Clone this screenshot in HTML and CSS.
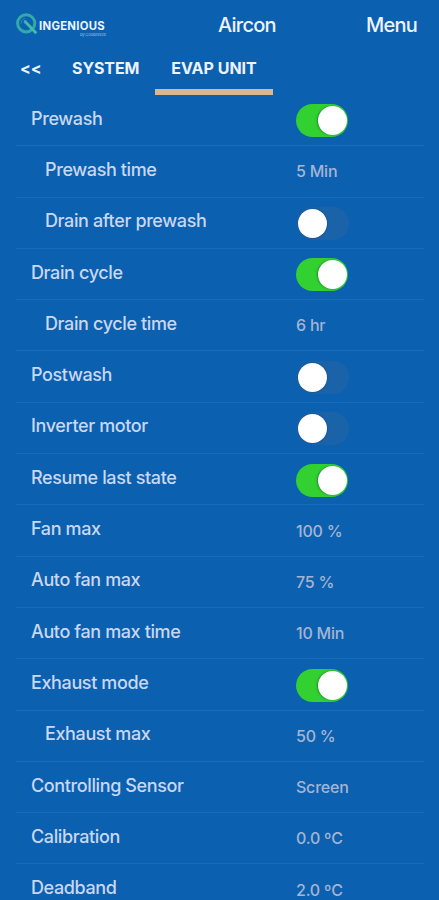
FILE: index.html
```
<!DOCTYPE html>
<html lang="en">
<head>
<meta charset="utf-8">
<title>Aircon</title>
<link rel="stylesheet" href="styles.css">
</head>
<body>
<header class="bar">
  <div class="logo">
    <svg class="mark" viewBox="0 0 22 22" width="22" height="22" fill="none">
      <circle cx="10.2" cy="10.3" r="8.6" stroke="#32aaa6" stroke-width="3"/>
      <path d="M5.2 10.8A5.2 5.2 0 0 1 8.7 5.4" stroke="#2d91b5" stroke-width="1"/>
      <path d="M9.5 9L15 14.6" stroke="#0b60b0" stroke-width="4"/>
      <path d="M9.5 9L20.3 20.3" stroke="#42bba7" stroke-width="2.8"/>
      <circle cx="9.3" cy="8.8" r="1.7" fill="#42aebb"/>
    </svg>
    <div class="brand"><span class="name">INGENIOUS</span><span class="by">by Coolbreeze</span></div>
  </div>
  <h1 class="title">Aircon</h1>
  <a class="menu">Menu</a>
</header>
<nav class="tabs">
  <a class="back">&lt;&lt;</a>
  <a class="system">SYSTEM</a>
  <a class="active">EVAP UNIT</a>
</nav>
<main class="list">
  <div class="row"><span class="label">Prewash</span><i class="switch on"></i></div>
  <div class="row sub"><span class="label">Prewash time</span><span class="value">5 Min</span></div>
  <div class="row sub"><span class="label">Drain after prewash</span><i class="switch"></i></div>
  <div class="row"><span class="label">Drain cycle</span><i class="switch on"></i></div>
  <div class="row sub"><span class="label">Drain cycle time</span><span class="value">6 hr</span></div>
  <div class="row"><span class="label">Postwash</span><i class="switch"></i></div>
  <div class="row"><span class="label">Inverter motor</span><i class="switch"></i></div>
  <div class="row"><span class="label">Resume last state</span><i class="switch on"></i></div>
  <div class="row"><span class="label">Fan max</span><span class="value">100 %</span></div>
  <div class="row"><span class="label">Auto fan max</span><span class="value">75 %</span></div>
  <div class="row"><span class="label">Auto fan max time</span><span class="value">10 Min</span></div>
  <div class="row"><span class="label">Exhaust mode</span><i class="switch on"></i></div>
  <div class="row sub"><span class="label">Exhaust max</span><span class="value">50 %</span></div>
  <div class="row"><span class="label">Controlling Sensor</span><span class="value">Screen</span></div>
  <div class="row"><span class="label">Calibration</span><span class="value">0.0 ºC</span></div>
  <div class="row"><span class="label">Deadband</span><span class="value">2.0 ºC</span></div>
</main>
</body>
</html>
```
FILE: styles.css
```
* { box-sizing: border-box; }
html, body { height: 900px; overflow: hidden; }
body {
  margin: 0;
  background: #0b60b0;
  color: #edf3ff;
  font-family: Inter, "Liberation Sans", sans-serif;
}
.bar {
  display: grid;
  grid-template-columns: 202px 89px 1fr;
  height: 50px;
  padding-left: 16px;
}
.logo { display: flex; padding-top: 13px; }
.mark { flex: none; }
.brand { display: flex; flex-direction: column; width: 67px; margin-left: 1px; padding-top: 7px; }
.name { font-size: 11.3px; line-height: 13px; font-weight: 700; letter-spacing: 0.3px; }
.by { align-self: flex-end; font-size: 4px; line-height: 4px; color: #9cc2e8; letter-spacing: -0.1px; }
.title, .menu {
  margin: 0;
  font-size: 20px;
  line-height: 50px;
  font-weight: 450;
  letter-spacing: -0.75px;
}
.menu { justify-self: end; margin-right: 22px; }
.tabs { display: flex; height: 45px; padding-left: 20px; font-size: 16px; font-weight: 700; line-height: 37px; }
.back { width: 52px; }
.system { width: 83px; letter-spacing: -0.1px; }
.active { width: 118px; text-align: center; border-bottom: 6px solid #d9b792; }
.list { margin: 0 15px 0 16px; }
.row {
  display: grid;
  grid-template-columns: 265px 1fr;
  align-items: center;
  height: 51.3px;
  padding-left: 15px;
  border-bottom: 1.5px solid #176bc0;
  color: #cad7f0;
}
.row.sub { grid-template-columns: 251px 1fr; padding-left: 29px; }
.label { font-size: 18px; line-height: 24px; padding-bottom: 3px; font-weight: 450; letter-spacing: -0.38px; }
.value { font-size: 16px; line-height: 24px; font-weight: 450; color: #a5b5d2; letter-spacing: -0.22px; }
.switch {
  display: flex;
  align-items: center;
  width: 53px;
  height: 33px;
  margin-top: 1.6px;
  padding: 0 2px;
  border-radius: 17px;
  background: #1b63a9;
}
.switch::after {
  content: "";
  width: 29px;
  height: 29px;
  border-radius: 50%;
  background: #fff;
  box-shadow: 0 0 2px rgba(0, 30, 80, .5);
}
.switch.on { width: 52px; justify-content: flex-end; padding-right: 1px; background: #33d032; }
.switch.on::after { box-shadow: -1px 0 2px rgba(0, 90, 20, .5); }
```
